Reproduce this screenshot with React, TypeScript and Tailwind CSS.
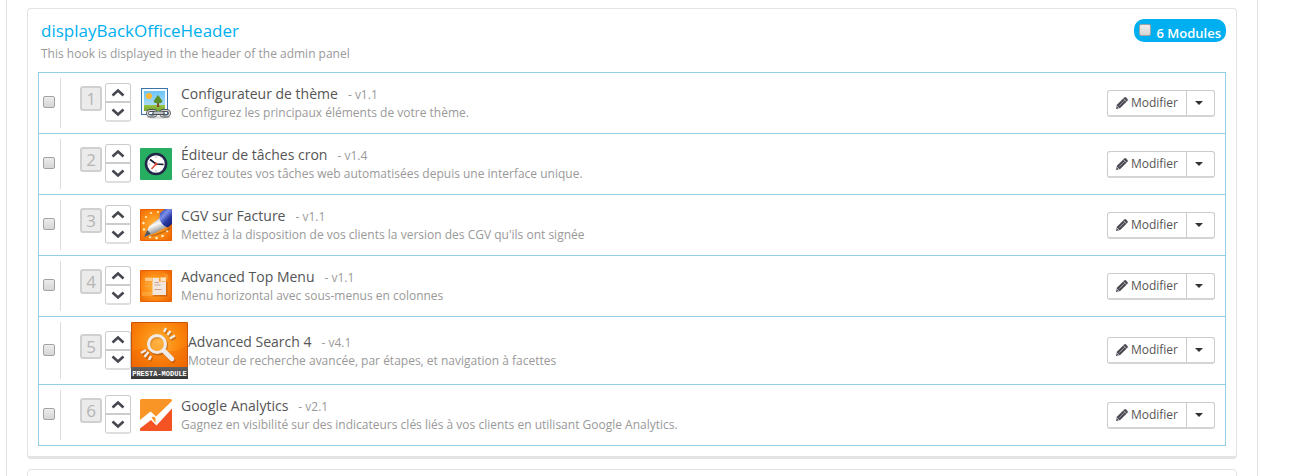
import type { ReactNode } from "react";

function ThemeIcon() {
  return (
    <svg width="32" height="32" viewBox="0 0 32 32">
      <defs>
        <linearGradient id="sky" x1="0" y1="0" x2="0" y2="1">
          <stop offset="0" stopColor="#6cc3f5" />
          <stop offset="1" stopColor="#c3e8fb" />
        </linearGradient>
        <linearGradient id="grass" x1="0" y1="0" x2="0" y2="1">
          <stop offset="0" stopColor="#9cc443" />
          <stop offset="1" stopColor="#6fa531" />
        </linearGradient>
      </defs>
      <rect x="1.500" y="1.500" width="26" height="26" fill="#f5faff" stroke="#3c74aa" />
      <rect x="4" y="4" width="21" height="20" fill="url(#sky)" />
      <path d="M4 18h21v6H4z" fill="url(#grass)" />
      <circle cx="9" cy="9" r="3.100" fill="#fdb83a" />
      <path d="M17.300 15h1.500l.5 5h-2.500z" fill="#8a4b22" />
      <path d="M18 8l2.400 3.200 1.800 2.600c.4 2-1.500 2.500-4.200 2.500s-4.600-.5-4.200-2.500l1.800-2.600z" fill="#5b8f27" />
      <ellipse cx="18.500" cy="30.500" rx="12" ry="1.300" fill="#000" opacity=".15" />
      <g fill="none">
        <rect x="7.500" y="23.500" width="9" height="5.500" rx="2.750" stroke="#4b5055" strokeWidth="2.800" />
        <rect x="20.500" y="23.500" width="9" height="5.500" rx="2.750" stroke="#4b5055" strokeWidth="2.800" />
        <rect x="7.500" y="23.500" width="9" height="5.500" rx="2.750" stroke="#d4d6d8" strokeWidth="1.200" />
        <rect x="20.500" y="23.500" width="9" height="5.500" rx="2.750" stroke="#d4d6d8" strokeWidth="1.200" />
        <path d="M14 26.300h9" stroke="#4b5055" strokeWidth="3.400" strokeLinecap="round" />
        <path d="M14 26h9" stroke="#e2e4e6" strokeWidth="1.400" strokeLinecap="round" />
      </g>
    </svg>
  );
}

function ClockIcon() {
  return (
    <svg width="32" height="32" viewBox="0 0 32 32">
      <rect width="32" height="32" rx="1" fill="#27ae60" />
      <circle cx="16" cy="16" r="10" fill="#fff" stroke="#22284a" strokeWidth="2.600" />
      <path d="M16 8.500V10M16 22v1.500M8.500 16H10M22 16h1.500" stroke="#aab" strokeWidth="1" />
      <path d="M10 11.500l6 4.500 7.500.5" fill="none" stroke="#14182c" strokeWidth="1.700" />
      <path d="M16.500 15.500L11.500 21" stroke="#d9432f" strokeWidth="1.300" />
      <circle cx="16" cy="16" r="1.400" fill="#d9432f" />
    </svg>
  );
}

function OrangeTile({ id, children }: { id: string; children: ReactNode }) {
  return (
    <svg width="32" height="32" viewBox="0 0 32 32">
      <defs>
        <radialGradient id={id} cx=".45" cy=".5" r=".7">
          <stop offset="0" stopColor="#ffb43c" />
          <stop offset=".55" stopColor="#fb8a14" />
          <stop offset="1" stopColor="#ee6200" />
        </radialGradient>
      </defs>
      <rect width="32" height="32" rx="1" fill={`url(#${id})`} />
      <rect x=".5" y=".5" width="31" height="31" rx="1" fill="none" stroke="#ea6000" />
      {children}
    </svg>
  );
}

function PenIcon() {
  return (
    <OrangeTile id="pen-tile">
      <defs>
        <linearGradient id="pen-metal" x1=".3" y1=".1" x2=".7" y2=".9">
          <stop offset="0" stopColor="#a9aaae" />
          <stop offset=".35" stopColor="#fbfbfb" />
          <stop offset=".65" stopColor="#b3b4b8" />
          <stop offset="1" stopColor="#5d5f66" />
        </linearGradient>
        <linearGradient id="pen-body" x1=".2" y1="0" x2=".9" y2="1">
          <stop offset="0" stopColor="#2f44b4" />
          <stop offset=".3" stopColor="#7d90e8" />
          <stop offset=".6" stopColor="#2a3aa6" />
          <stop offset="1" stopColor="#141d66" />
        </linearGradient>
      </defs>
      <g fill="#fff0c0">
        <circle cx="18" cy="3" r="1" />
        <circle cx="11" cy="4" r="1.100" />
        <circle cx="6" cy="8" r="1.100" />
        <circle cx="3.500" cy="14" r="1.200" />
        <circle cx="4" cy="20.500" r="1.200" />
        <circle cx="10" cy="28" r="1.300" />
        <circle cx="16.500" cy="29" r="1.300" />
        <circle cx="22.500" cy="27" r="1.300" />
        <circle cx="27" cy="22" r="1.300" />
      </g>
      <path d="M4 29l20-7 7-5-1 4-12 5z" fill="#7a3500" opacity=".4" />
      <path d="M4 28l5-10.500L20 8.500l7.500 9L15 24z" fill="url(#pen-metal)" />
      <path d="M4 28l3.300-7 3.500 4z" fill="#55565b" />
      <path d="M19.500 9L20 4l5-4h7v15l-4 3.500c-4-1-8-5-8.500-9.500z" fill="url(#pen-body)" />
    </OrangeTile>
  );
}

function MenuIcon() {
  return (
    <OrangeTile id="menu-tile">
      <path d="M5 7h23v2H5zM2 22h12v4H2zM22 3l7 2-3 3z" fill="#ffd27a" opacity=".3" />
      <rect x="5" y="8" width="7" height="3" fill="#fff0da" opacity=".55" />
      <rect x="13" y="12" width="14.500" height="14.500" fill="#a03c00" opacity=".4" />
      <path d="M12.500 8H19v3.500h7V25H12.500z" fill="#f3e6dc" />
      <path d="M20.500 7.500H26V11h-5.500z" fill="#ffe3bd" />
      <path d="M14.500 12.500H19M14.500 15h6M14.500 19.500h7" stroke="#c5a592" strokeWidth="1" />
      <path d="M5 13h5M5 16h5" stroke="#ffb65a" strokeWidth="1" opacity=".6" />
    </OrangeTile>
  );
}

function SearchModuleIcon() {
  return (
    <svg width="57" height="57" viewBox="0 0 57 57">
      <defs>
        <radialGradient id="search-tile" cx=".5" cy=".35" r=".7">
          <stop offset="0" stopColor="#ffad33" />
          <stop offset=".5" stopColor="#fb870d" />
          <stop offset="1" stopColor="#ee6500" />
        </radialGradient>
        <linearGradient id="label" x1="0" y1="0" x2="0" y2="1">
          <stop offset="0" stopColor="#626262" />
          <stop offset="1" stopColor="#333" />
        </linearGradient>
      </defs>
      <rect width="57" height="57" rx="1" fill="url(#search-tile)" />
      <path d="M1 30C16 20 39 38 56 23v22H1z" fill="#e85600" opacity=".25" />
      <rect x=".5" y=".5" width="56" height="56" rx="1" fill="none" stroke="#c85208" />
      <g stroke="#8c3a00" opacity=".4" fill="none" transform="translate(1 1.500)">
        <circle cx="26" cy="22" r="8.500" strokeWidth="3.200" />
        <path d="M33 29l8 8" strokeWidth="5" strokeLinecap="round" />
        <path d="M33 10l2-4M36.500 13l3-4M39 16.500l5-3M10 31l5-3M13.500 35l4-5M18 38l2-4" strokeWidth="2.400" />
      </g>
      <g stroke="#efebe8" fill="none">
        <circle cx="26" cy="22" r="8.500" strokeWidth="3" fill="#ffbf5c" fillOpacity=".35" />
        <path d="M33 29l8 8" strokeWidth="4.600" strokeLinecap="round" />
        <path d="M33 10l2-4M36.500 13l3-4M39 16.500l5-3M10 31l5-3M13.500 35l4-5M18 38l2-4" strokeWidth="2.400" />
      </g>
      <rect y="45" width="57" height="12" fill="url(#label)" />
      <text x="28.500" y="54" textAnchor="middle" fontFamily="Liberation Mono, monospace" fontSize="7" fontWeight="700" fill="#fff">
        PRESTA-MODULE
      </text>
    </svg>
  );
}

function AnalyticsIcon() {
  return (
    <svg width="32" height="32" viewBox="0 0 32 32">
      <rect width="32" height="32" rx="1.500" fill="#f99526" />
      <path d="M0 25L11 14l5 5L32 8v22.500q0 1.500-1.500 1.500h-29Q0 32 0 30.500z" fill="#f45324" />
      <path d="M0 21L10.500 12.500 16 17.500 32 2v7.500L16.500 26.500 11 21 0 29.500z" fill="#fff" />
      <path d="M11.500 18.500l4 5.500v-5l-2-1.500z" fill="#f99526" />
    </svg>
  );
}

function Pencil() {
  return (
    <svg width="14" height="14" viewBox="0 0 14 14" aria-hidden="true">
      <path d="M1 13l.9-4.200L9.200 1.500q.9-.8 1.800 0l1.500 1.500q.8.900 0 1.800L5.200 12.100z" fill="#4a4a52" />
      <path d="M4.300 9.700L9.600 4.400" stroke="#a9abb5" strokeWidth=".8" />
      <path d="M8.400 2.600l3 3" stroke="#fff" strokeWidth=".6" />
      <path d="M2.200 10.300l1.500 1.500" stroke="#fff" strokeWidth=".9" />
    </svg>
  );
}

function Chevron({ down = false }: { down?: boolean }) {
  return (
    <svg width="14" height="14" viewBox="0 0 14 14" fill="none" stroke="#45474f" strokeWidth="2.600" aria-hidden="true">
      <path d={down ? "M1.500 4.500L7 9.500l5.500-5" : "M1.500 9.500L7 4.500l5.500 5"} />
    </svg>
  );
}

const checkbox =
  "size-3 shrink-0 appearance-none rounded-xs border border-[#a3a3a3] bg-linear-to-b from-[#ececec] to-[#d6d6d6] checked:bg-[#777]";

type Module = { name: string; version: string; description: string; icon: ReactNode };

const modules: Module[] = [
  { name: "Configurateur de thème", version: "v1.1", description: "Configurez les principaux éléments de votre thème.", icon: <ThemeIcon /> },
  { name: "Éditeur de tâches cron", version: "v1.4", description: "Gérez toutes vos tâches web automatisées depuis une interface unique.", icon: <ClockIcon /> },
  { name: "CGV sur Facture", version: "v1.1", description: "Mettez à la disposition de vos clients la version des CGV qu'ils ont signée", icon: <PenIcon /> },
  { name: "Advanced Top Menu", version: "v1.1", description: "Menu horizontal avec sous-menus en colonnes", icon: <MenuIcon /> },
  { name: "Advanced Search 4", version: "v4.1", description: "Moteur de recherche avancée, par étapes, et navigation à facettes", icon: <SearchModuleIcon /> },
  { name: "Google Analytics", version: "v2.1", description: "Gagnez en visibilité sur des indicateurs clés liés à vos clients en utilisant Google Analytics.", icon: <AnalyticsIcon /> },
];

function ModuleRow({ module, position }: { module: Module; position: number }) {
  return (
    <li className="-mt-px flex items-center border border-[#95cde5] py-[5px] pr-2.5 first:mt-0">
      <div className="flex min-h-[50px] w-[22px] shrink-0 items-center self-stretch border-r border-[#dcdcdc] pb-0.5 pl-1">
        <input type="checkbox" aria-label={module.name} className={checkbox} />
      </div>
      <div className="ml-[19px] flex shrink-0 gap-[3px] pb-px">
        <span className="mt-[3px] flex h-[25px] w-[22px] items-center justify-center rounded-[3px] border-2 border-[#d0d0d0] bg-[#ebebeb] text-[17px] leading-none text-[#b5b5b5]">
          {position}
        </span>
        <div className="flex w-[26px] flex-col">
          <button type="button" aria-label="Monter" className="flex h-5 items-center justify-center rounded-t-[3px] border border-b-2 border-[#cccccc] bg-white">
            <Chevron />
          </button>
          <button type="button" aria-label="Descendre" className="flex h-[19px] items-center justify-center rounded-b-[3px] border border-t-0 border-b-2 border-[#cccccc] border-b-[#dedede] bg-white">
            <Chevron down />
          </button>
        </div>
      </div>
      <div className="flex min-w-[50px] shrink-0 justify-center">{module.icon}</div>
      <div className="min-w-0 flex-1">
        <div className="text-[14px] leading-[19px] text-[#555555]">
          {module.name}
          <span className="ml-2.5 text-[12px] text-[#999999]">- {module.version}</span>
        </div>
        <p className="text-[12px] leading-[18px] text-[#999999]">{module.description}</p>
      </div>
      <div className="flex h-[27px] shrink-0 text-[12px] text-[#555555]">
        <button type="button" className="flex items-center gap-0.5 rounded-l-[3px] border border-b-2 border-[#cccccc] border-b-[#d4d4d4] bg-white pr-2 pl-[7px]">
          <Pencil />
          Modifier
        </button>
        <button type="button" aria-label="Plus d'actions" className="-ml-px flex w-[29px] items-center justify-start rounded-r-[3px] border border-b-2 border-[#cccccc] border-b-[#d4d4d4] bg-white pl-2">
          <svg width="8" height="4" viewBox="0 0 8 4" fill="#333" aria-hidden="true">
            <path d="M0 0h8L4 4z" />
          </svg>
        </button>
      </div>
    </li>
  );
}

export default function App() {
  return (
    <div className="h-screen overflow-hidden bg-white pr-[35px] pl-1.5 font-['Open_Sans',sans-serif]">
      <main className="flex h-full flex-col gap-2.5 border-x border-[#e3e3e3] px-5 pt-2">
        <section className="shrink-0 rounded-[4px] border border-b-[3px] border-[#e3e3e3] p-2.5">
          <header className="flex h-[53px] items-start justify-between">
            <div className="pl-[3px]">
              <h2 className="text-[17px] leading-6 text-[#00aff0]">
                <a href="#displayBackOfficeHeader">displayBackOfficeHeader</a>
              </h2>
              <p className="text-[12px] leading-[22px] text-[#999999]">This hook is displayed in the header of the admin panel</p>
            </div>
            <label className="flex h-[23px] items-start gap-[5px] rounded-[10px] bg-[#00aff0] px-[5px] pt-[5px] text-[13px] leading-[18px] font-semibold text-white">
              <input type="checkbox" className={checkbox} />
              <span>6 Modules</span>
            </label>
          </header>
          <ul>
            {modules.map((module, index) => (
              <ModuleRow key={module.name} module={module} position={index + 1} />
            ))}
          </ul>
        </section>
        <section className="h-12 shrink-0 rounded-[4px] border border-[#e3e3e3]" />
      </main>
    </div>
  );
}
